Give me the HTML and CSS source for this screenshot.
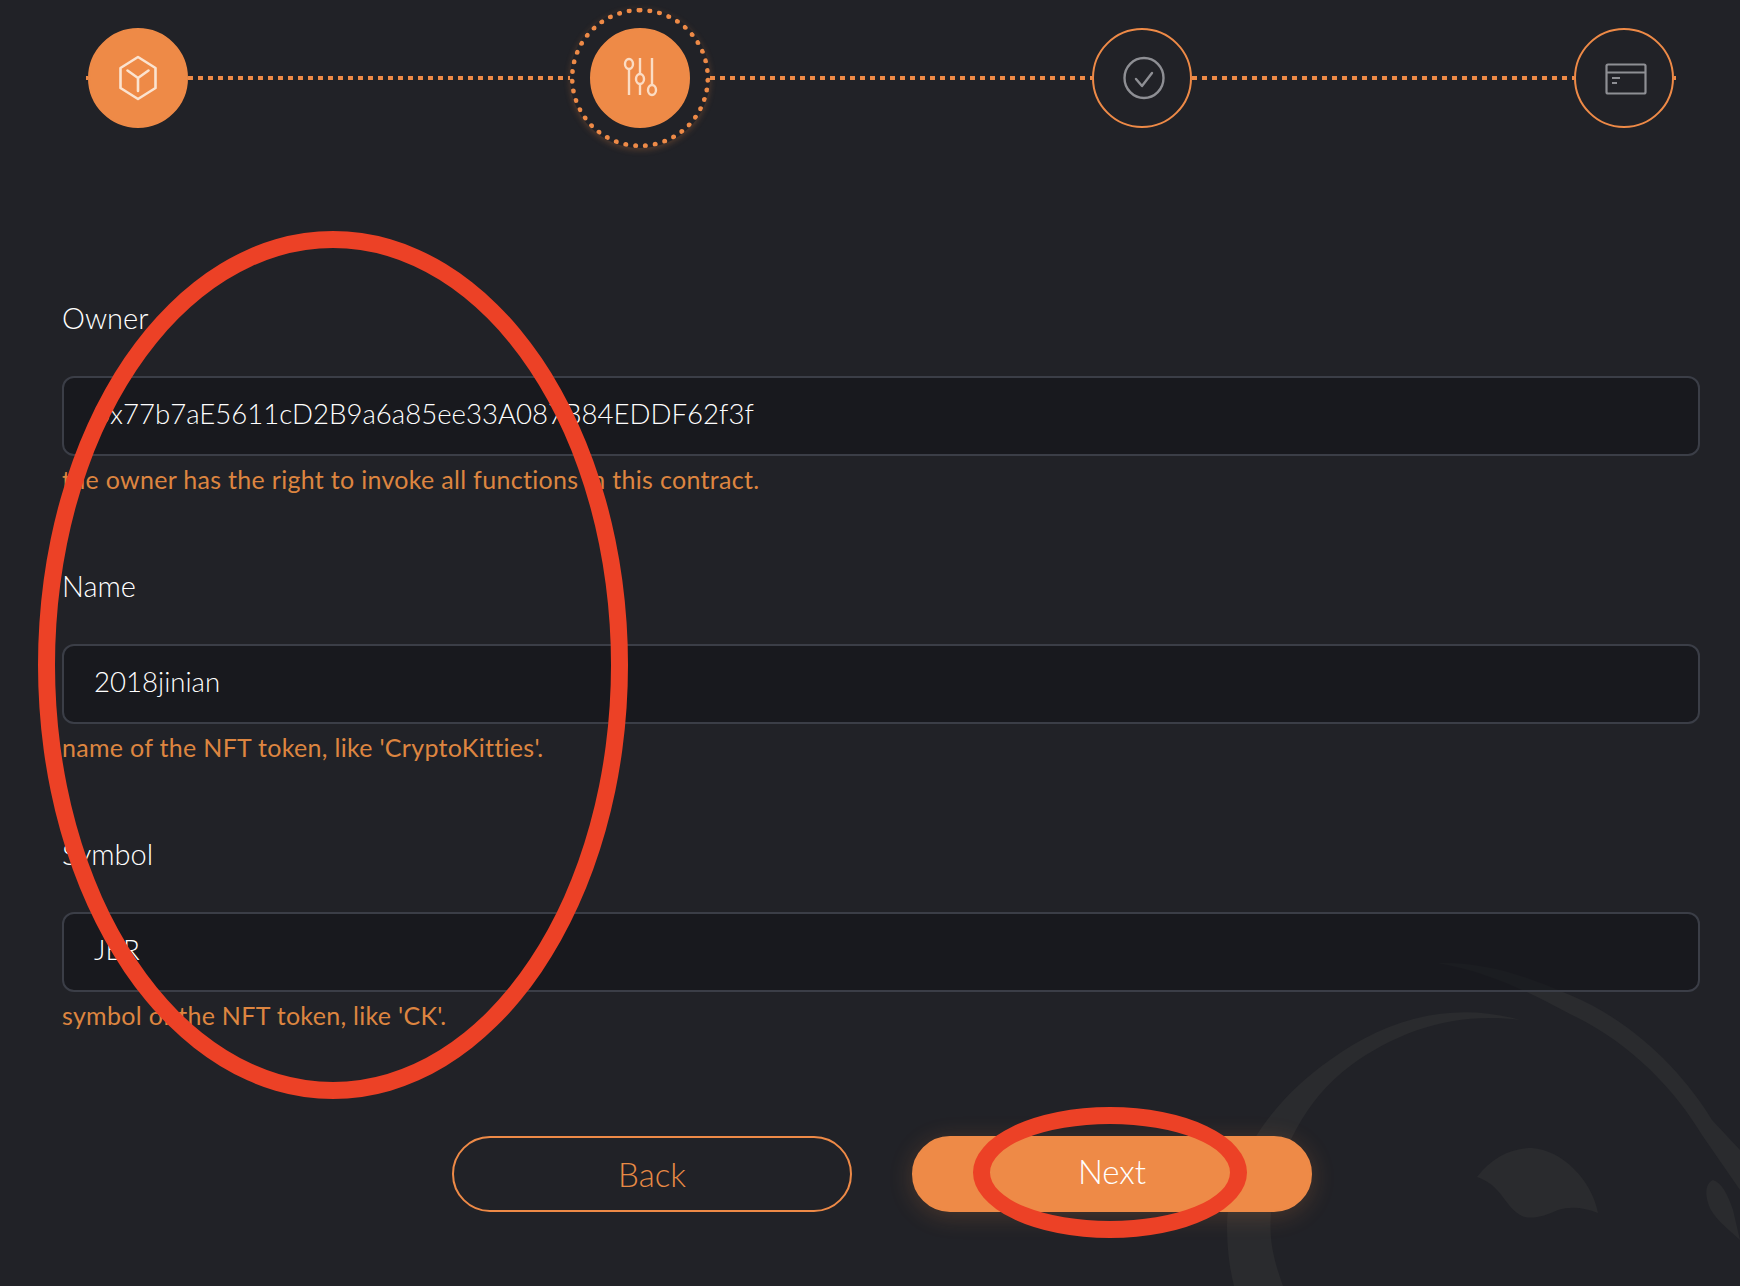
FILE: index.html
```html
<!DOCTYPE html>
<html lang="en">
<head>
    <meta charset="UTF-8">
    <title>Create NFT token</title>
    <link rel="stylesheet" href="styles.css">
</head>
<body>
    <!-- background watermark -->
    <svg class="watermark" width="1740" height="1286" viewBox="0 0 1740 1286">
        <path d="M1520 1020C1450 1000 1385 1020 1330 1060C1265 1105 1228 1170 1227 1225C1227 1250 1230 1270 1234 1286H1283C1272 1255 1268 1235 1272 1205C1280 1150 1305 1100 1350 1066C1400 1030 1455 1012 1520 1020Z"/>
        <path d="M1438 963C1490 962 1530 978 1570 995C1635 1022 1685 1075 1712 1120L1740 1150V1190L1702 1135C1675 1090 1630 1042 1570 1014C1530 993 1490 972 1438 963Z"/>
        <path d="M1477 1177C1492 1157 1512 1148 1532 1148C1562 1150 1592 1180 1598 1213C1585 1208 1572 1206 1558 1210C1545 1216 1532 1220 1522 1216C1505 1208 1502 1185 1477 1177Z"/>
        <path d="M1713 1180C1722 1183 1728 1195 1733 1210L1740 1240C1732 1232 1718 1222 1711 1210C1705 1198 1704 1184 1713 1180Z"/>
    </svg>

    <div class="page">
        <div class="stepper">
            <div class="stub"></div>
            <div class="step step-done">
                <svg width="40" height="46" viewBox="0 0 40 46" fill="none" stroke="#fbe3d0" stroke-width="2.6" stroke-linejoin="round" stroke-linecap="round">
                    <path d="M20 2L37.5 13V33L20 44L2.5 33V13Z"/>
                    <path d="M9.5 15.5L20 23L30.5 15.5M20 23V36"/>
                </svg>
            </div>
            <div class="line"></div>
            <div class="step-ring">
                <div class="step step-done">
                    <svg class="icon-sliders" width="36" height="42" viewBox="0 0 36 42" fill="none" stroke="#fbdcc4" stroke-width="2.4">
                        <path d="M6 12V38M17 1V18M17 27V38M29 1V27"/>
                        <ellipse cx="6" cy="7" rx="4" ry="5"/>
                        <ellipse cx="17" cy="22" rx="4" ry="5"/>
                        <ellipse cx="29" cy="33" rx="4" ry="5"/>
                    </svg>
                </div>
            </div>
            <div class="line"></div>
            <div class="step">
                <svg class="icon-check" width="42" height="44" viewBox="0 0 42 44" fill="none" stroke="#8e8f94" stroke-width="2.4" stroke-linecap="round" stroke-linejoin="round">
                    <ellipse cx="21" cy="22" rx="19.5" ry="20"/>
                    <path d="M13 23L19 30L29 17"/>
                </svg>
            </div>
            <div class="line line-last"></div>
            <div class="step">
                <svg class="icon-card" width="42" height="32" viewBox="0 0 42 32" fill="none" stroke="#8e8f94" stroke-width="2.2" stroke-linejoin="round">
                    <rect x="1.5" y="1.5" width="39" height="29" rx="1.5"/>
                    <path d="M1.5 9.5H40.5M7 15H15M7 20H12"/>
                </svg>
            </div>
            <div class="stub"></div>
        </div>

        <div class="field">
            <label>Owner</label>
            <div class="input-box">0x77b7aE5611cD2B9a6a85ee33A087B84EDDF62f3f</div>
            <p class="hint">the owner has the right to invoke all functions in this contract.</p>
        </div>
        <div class="field">
            <label>Name</label>
            <div class="input-box">2018jinian</div>
            <p class="hint">name of the NFT token, like 'CryptoKitties'.</p>
        </div>
        <div class="field">
            <label>Symbol</label>
            <div class="input-box">JBR</div>
            <p class="hint">symbol of the NFT token, like 'CK'.</p>
        </div>

        <div class="actions">
            <button class="btn btn-back">Back</button>
            <button class="btn btn-next">Next</button>
        </div>
    </div>

    <!-- red marker circles drawn over the screenshot -->
    <div class="marker marker-fields"></div>
    <div class="marker marker-next"></div>
</body>
</html>
```

FILE: styles.css
```css
* {
    box-sizing: border-box;
}
html, body {
    margin: 0;
    height: 1286px;
    overflow: hidden;
}
body {
    position: relative;
    background-color: #212227;
    font-family: Lato, "Open Sans", sans-serif;
    color: #fff;
}
.watermark {
    position: absolute;
    top: 0;
    left: 0;
    fill: #2a2b2e;
}
.page {
    position: relative;
    padding: 0 40px 0 62px;
}
.stepper {
    display: flex;
    align-items: center;
    height: 156px;
    padding-left: 24px;
    margin-bottom: 145px;
}
.stub {
    width: 2px;
    height: 4px;
    background-color: #ee8a47;
}
.line {
    width: 402px;
    height: 4px;
    background-image: repeating-linear-gradient(90deg, #ee8a47 0, #ee8a47 5px, transparent 5px, transparent 10px);
}
.line-last {
    width: 382px;
}
.step {
    flex: none;
    display: flex;
    align-items: center;
    justify-content: center;
    width: 100px;
    height: 100px;
    border: 2px solid #ee8a47;
    border-radius: 50%;
}
.step-done {
    background-color: #ee8a47;
}
.step-ring {
    position: relative;
    flex: none;
    display: flex;
    align-items: center;
    justify-content: center;
    width: 140px;
    height: 140px;
    margin: 0 -20px;
    border: 5px dotted #ee8a47;
    border-radius: 50%;
    background-color: #212227;
    box-shadow: 0 2px 6px rgba(238, 138, 71, 0.25);
}
.icon-sliders {
    width: 38px;
    margin-left: 2px;
}
.icon-check {
    margin-left: 3px;
}
.icon-card {
    margin: 1px 0 0 4px;
}
.field {
    margin-bottom: 71px;
}
label {
    display: block;
    height: 36px;
    margin-bottom: 39px;
    font-size: 29px;
    font-weight: 300;
    line-height: 34px;
}
.input-box {
    height: 80px;
    padding: 0 30px;
    background-color: rgba(20, 21, 26, 0.65);
    border: 2px solid #3b3e47;
    border-radius: 12px;
    font-size: 27.6px;
    font-weight: 300;
    line-height: 72px;
}
.hint {
    height: 36px;
    margin: 6px 0 0;
    color: #dd8540;
    font-size: 25px;
    letter-spacing: 0.3px;
    line-height: 34px;
}
.actions {
    display: flex;
    justify-content: center;
    gap: 60px;
    margin-top: 102px;
    padding-left: 2px;
}
.btn {
    width: 400px;
    height: 76px;
    border: 2px solid #ee8a47;
    border-radius: 38px;
    font-family: inherit;
    font-size: 33px;
    font-weight: 300;
}
.btn-back {
    background: none;
    color: #e88a45;
}
.btn-next {
    padding-bottom: 8px;
    background-color: #ee8a47;
    color: #fff;
    box-shadow: 0 4px 24px rgba(238, 138, 71, 0.2);
}
.marker {
    position: absolute;
    border: 17px solid #ec4126;
    border-radius: 50%;
}
.marker-fields {
    top: 231px;
    left: 38px;
    width: 590px;
    height: 868px;
}
.marker-next {
    top: 1107px;
    left: 973px;
    width: 274px;
    height: 131px;
}
```
